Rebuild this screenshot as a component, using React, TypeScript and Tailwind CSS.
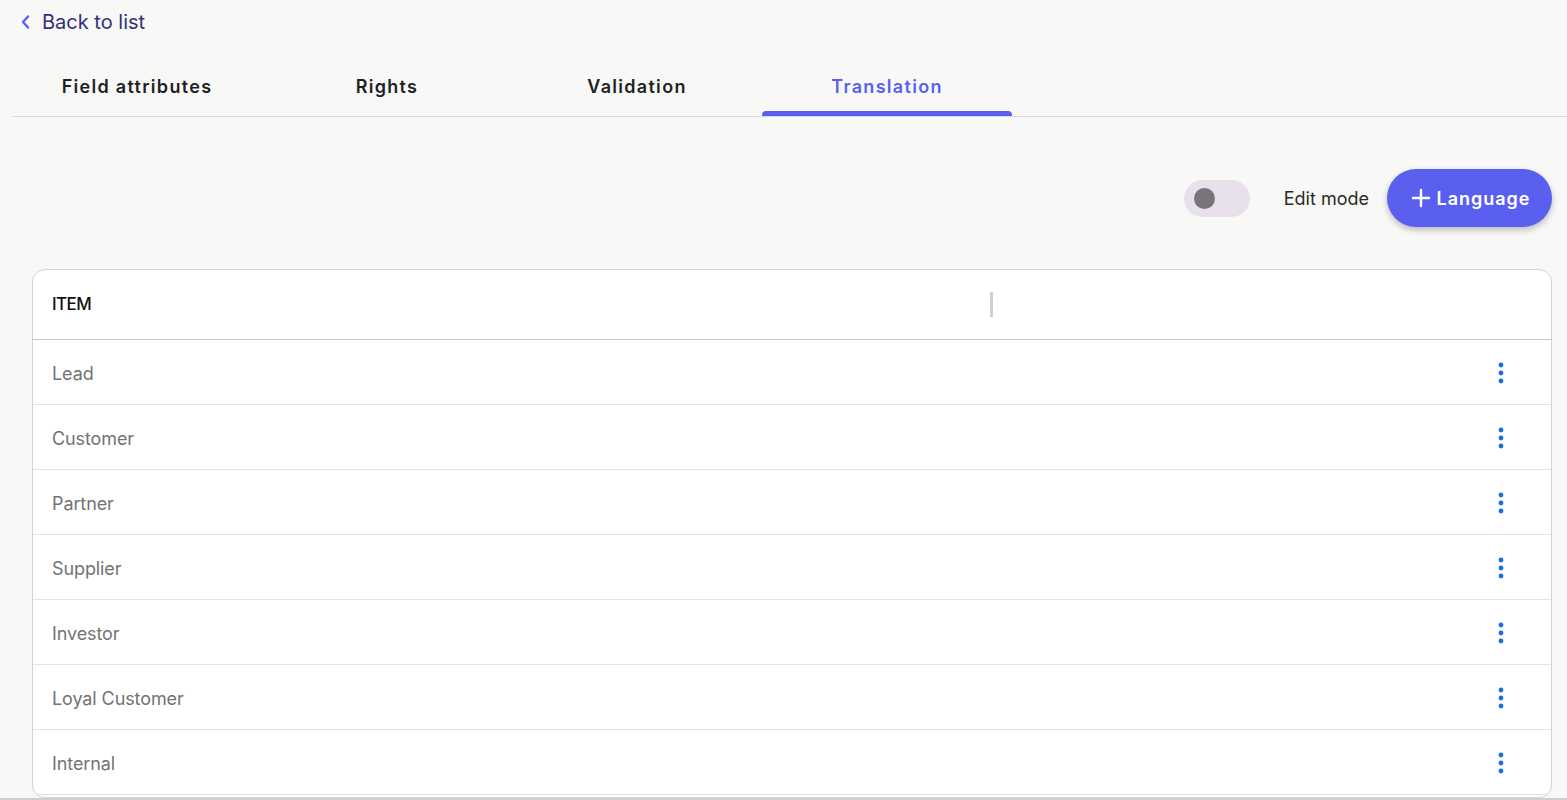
import React from "react";

const rows = ["Lead", "Customer", "Partner", "Supplier", "Investor", "Loyal Customer", "Internal", "Other"];
const tabs = ["Field attributes", "Rights", "Validation", "Translation"];

function Dots() {
  return (
    <svg width="6" height="22" viewBox="0 0 6 22" aria-hidden>
      <circle cx="3" cy="3" r="2.4" fill="#1a6fe8" />
      <circle cx="3" cy="11" r="2.4" fill="#1a6fe8" />
      <circle cx="3" cy="19" r="2.4" fill="#1a6fe8" />
    </svg>
  );
}

export default function App() {
  return (
    <div
      className="w-full h-[800px] bg-[#f8f8f7] flex flex-col overflow-hidden"
      style={{ fontFamily: "Inter, 'Noto Sans', sans-serif" }}
    >
      <div className="flex-1 overflow-hidden flex flex-col">
        <div className="pl-[20px] pt-[9px] flex items-center gap-[11px] h-[30px] box-content">
          <svg width="11" height="16" viewBox="0 0 11 16" aria-hidden>
            <path d="M8 2.5 L3 8 L8 13.5" fill="none" stroke="#5b5fef" strokeWidth="2.4" strokeLinecap="round" strokeLinejoin="round" />
          </svg>
          <span className="text-[20px] text-[#35307a] leading-none">Back to list</span>
        </div>

        <div className="ml-[12px] mt-[27px] flex border-b border-[#dcdcdc] h-[61px]">
          {tabs.map((t, i) => (
            <div key={t} className="w-[250px] relative flex items-center justify-center pb-[6px]">
              <span
                className={`text-[18px] font-semibold tracking-[1.3px] ${i === 3 ? "text-[#5b5fef]" : "text-[#1f1f24]"}`}
              >
                {t}
              </span>
              {i === 3 && <div className="absolute left-0 right-0 bottom-0 h-[5px] bg-[#5b5fef] rounded-t-[4px]" />}
            </div>
          ))}
        </div>

        <div className="flex items-center justify-end pr-[15px] mt-[52px] h-[58px]">
          <div className="w-[66px] h-[37px] rounded-full bg-[#e8e1ec] flex items-center pl-[10px]">
            <div className="w-[21px] h-[21px] rounded-full bg-[#77747a]" />
          </div>
          <span className="ml-[34px] text-[18px] text-[#2a2a2a]">Edit mode</span>
          <button className="ml-[18px] h-[58px] w-[165px] rounded-full bg-[#5b5fef] shadow-[0_3px_6px_rgba(0,0,0,0.25)] flex items-center justify-center gap-[5px] pl-[3px] text-white">
            <svg width="20" height="20" viewBox="0 0 20 20" aria-hidden>
              <path d="M10 2 V18 M2 10 H18" stroke="#fff" strokeWidth="2.4" strokeLinecap="round" />
            </svg>
            <span className="text-[18px] font-semibold tracking-[1px]">Language</span>
          </button>
        </div>

        <div className="ml-[32px] mr-[15px] mt-[42px] bg-white border border-[#d2d2d2] rounded-[13px] overflow-hidden">
          <div className="h-[70px] flex items-center border-b border-[#c6c6c6] relative">
            <span className="pl-[19px] text-[17px] font-medium text-[#111] tracking-[-0.6px]">ITEM</span>
            <div className="absolute left-[957px] top-[22px] w-[3px] h-[25px] bg-[#cfcfcf]" />
          </div>
          {rows.map((r) => (
            <div key={r} className="h-[65px] flex items-center justify-between border-b border-[#e2e2e2] pt-[2px]">
              <span className="pl-[19px] text-[18px] text-[#737373] tracking-[-0.1px]">{r === "Other" ? "" : r}</span>
              <div className="pr-[47px] flex items-center">
                <Dots />
              </div>
            </div>
          ))}
        </div>
      </div>
      <div className="h-[2px] bg-[#cfcfcf]" />
    </div>
  );
}
